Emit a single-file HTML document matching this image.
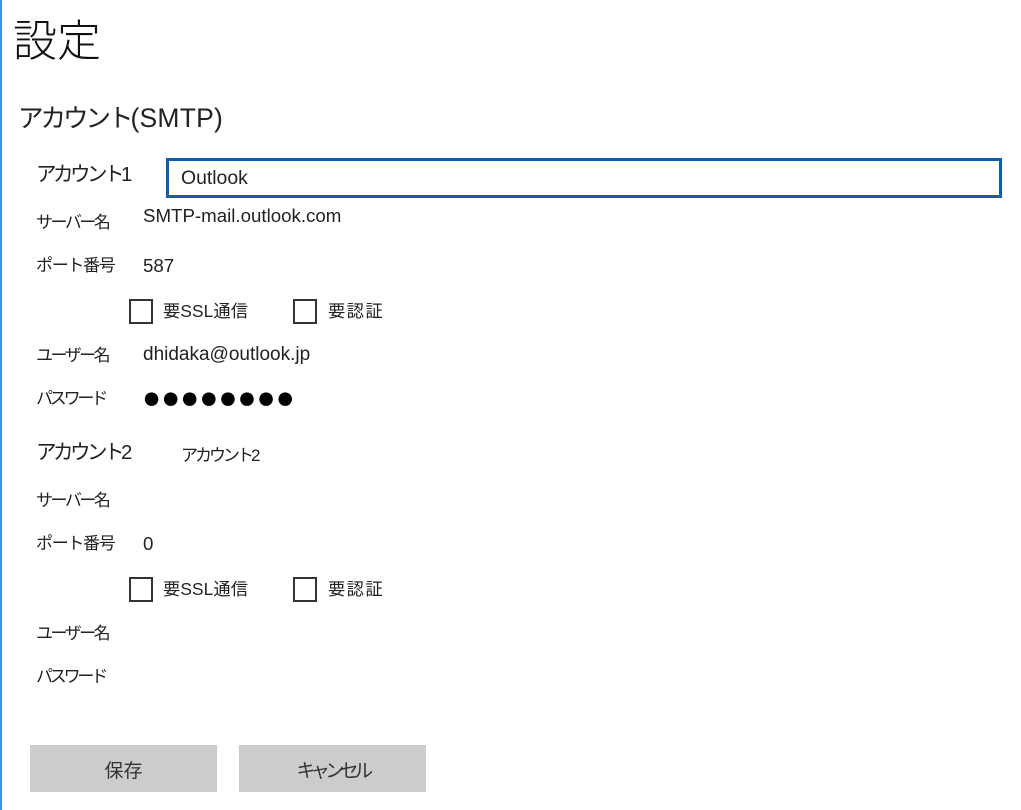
<!DOCTYPE html>
<html lang="ja">
<head>
<meta charset="utf-8">
<style>
html,body{margin:0;padding:0;background:#fff}
body{width:1021px;height:810px;position:relative;overflow:hidden;font-family:"Liberation Sans","Noto Sans CJK JP",sans-serif;color:#222}
#w{position:absolute;inset:0;filter:blur(.35px)}
.t{position:absolute;white-space:nowrap;line-height:30px;height:30px;font-weight:400}
.l{font-size:17px;left:36px;letter-spacing:-2.5px}
.v{font-size:18.7px;left:143px}
.h{font-size:20.5px;left:36px;letter-spacing:-3.5px}
.h span{letter-spacing:0}
.s{font-size:17.3px;letter-spacing:.1px}
.c{position:absolute;width:20px;height:21px;border:2px solid #333;box-sizing:content-box}
.b{position:absolute;top:745px;width:187px;height:47px;background:#cccccc;line-height:54px;text-align:center;font-size:19px;color:#333}
</style>
</head>
<body>
<div id="w">
<div style="position:absolute;left:0;top:0;width:2px;height:810px;background:#3e92dc"></div>
<div class="t" style="left:13px;top:12px;height:60px;line-height:60px;font-size:44px;color:#111;font-weight:300">設定</div>
<div class="t" style="left:18px;top:103px;font-size:25.5px;letter-spacing:-3px;color:#222">アカウント<span style="letter-spacing:.2px;font-size:26.5px">(SMTP)</span></div>

<div class="t h" style="top:160px">アカウント<span>1</span></div>
<div style="position:absolute;left:166px;top:158px;width:830px;height:34px;border:3px solid #0a5fb0;background:#fff"></div>
<div class="t" style="left:181px;top:163px;font-size:19.4px">Outlook</div>
<div class="t l" style="top:208px">サーバー名</div>
<div class="t v" style="top:201px">SMTP-mail.outlook.com</div>
<div class="t l" style="top:251px;letter-spacing:-1.3px">ポート番号</div>
<div class="t v" style="top:251px">587</div>
<div class="c" style="left:129px;top:299px"></div>
<div class="t s" style="left:163px;top:296px">要SSL通信</div>
<div class="c" style="left:293px;top:299px"></div>
<div class="t s" style="left:328px;top:296px;letter-spacing:1.4px">要認証</div>
<div class="t l" style="top:341px">ユーザー名</div>
<div class="t v" style="top:340px;font-size:19px">dhidaka@outlook.jp</div>
<div class="t l" style="top:384px;letter-spacing:-3.2px">パスワード</div>
<div class="t" style="left:142px;top:382px;font-size:31.6px;color:#000">●●●●●●●●</div>

<div class="t h" style="top:438px">アカウント<span>2</span></div>
<div class="t" style="left:181px;top:441px;font-size:17px;letter-spacing:-3px">アカウント<span style="letter-spacing:0">2</span></div>
<div class="t l" style="top:486px">サーバー名</div>
<div class="t l" style="top:529px;letter-spacing:-1.3px">ポート番号</div>
<div class="t v" style="top:529px">0</div>
<div class="c" style="left:129px;top:577px"></div>
<div class="t s" style="left:163px;top:574px">要SSL通信</div>
<div class="c" style="left:293px;top:577px"></div>
<div class="t s" style="left:328px;top:574px;letter-spacing:1.4px">要認証</div>
<div class="t l" style="top:619px">ユーザー名</div>
<div class="t l" style="top:662px;letter-spacing:-3.2px">パスワード</div>

<div class="b" style="left:30px">保存</div>
<div class="b" style="left:239px;letter-spacing:-4.6px">キャンセル</div>
</div>
</body>
</html>
